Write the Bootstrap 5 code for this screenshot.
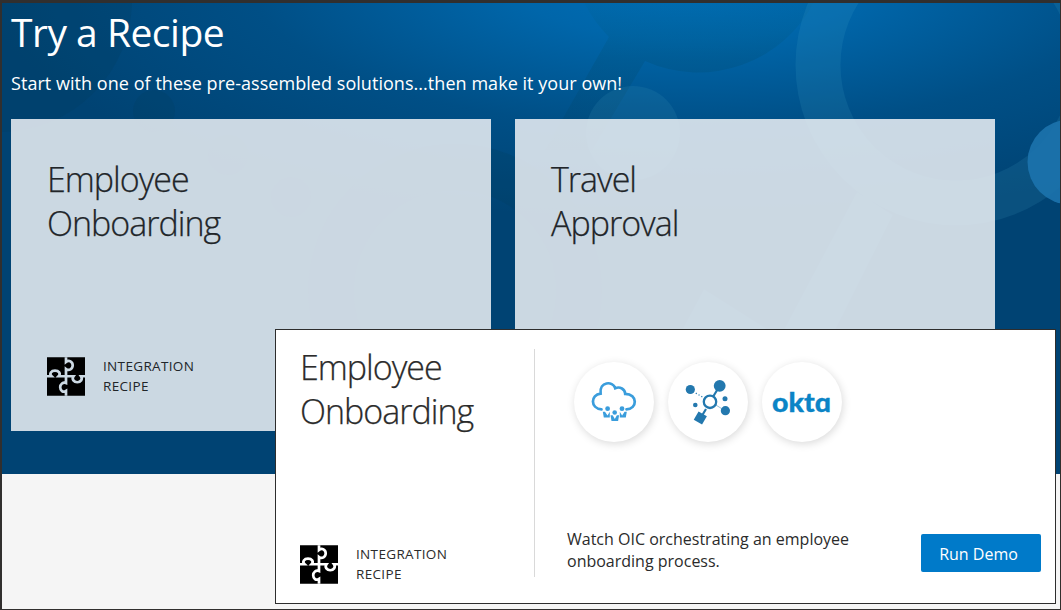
<!DOCTYPE html>
<html lang="en">
<head>
<meta charset="utf-8">
<title>Try a Recipe</title>
<meta name="viewport" content="width=device-width, initial-scale=1">
<link href="https://cdn.jsdelivr.net/npm/bootstrap@5.3.0/dist/css/bootstrap.min.css" rel="stylesheet">
<style>
body{font-family:"Open Sans","Noto Sans",sans-serif;color:#2b2b2b;background:#f5f5f5;overflow:hidden}
.frame{height:610px;border:solid #312f2e;border-width:3px 1px 1px 2px;background:#f5f5f5}
.hero{height:471px;background:#004373;padding:6px 9px;overflow:hidden}
.backdrop{left:-2px;top:-3px;z-index:0}
.hero-title{font-size:39px;line-height:46px;letter-spacing:-.5px;margin:0}
.hero-sub{font-size:18px;line-height:26px;letter-spacing:.045px;margin:15px 0 23px}
.tile{width:480px;height:312px;background:rgba(234,239,243,.865);padding:38px 36px 35px}
.tiles{gap:24px}
.tile-title{font-size:34px;line-height:44px;font-weight:300;letter-spacing:-1px;margin:0;-webkit-text-stroke:.25px currentColor}
.kind{font-size:13.5px;line-height:20px;letter-spacing:.34px;gap:18px}
.kind svg{--gap:#ccd9e3}
.detail{left:273px;top:326px;width:781px;height:275px;border:1px solid #2d2d2d;background:#fff;padding:15px 14px 20px 24px;z-index:2}
.detail .kind svg{--gap:#fff}
.detail-left{width:235px;border-right:1px solid #d9d9d9;height:228px;margin-top:4px}
.detail-left .tile-title{margin-top:-4px}
.detail-left .kind{margin-bottom:-7px}
.detail-right{padding:17px 0 0 39px}
.discs{gap:14px}
.disc{width:80px;height:80px;box-shadow:1px 2px 8px rgba(0,0,0,.15);background:#fff}
.desc{font-size:16px;line-height:22px;letter-spacing:0;margin:0 0 11px -7px}
.btn-demo{--bs-btn-color:#fff;--bs-btn-bg:#007ac9;--bs-btn-hover-bg:#006bb2;--bs-btn-hover-color:#fff;--bs-btn-border-radius:2px;--bs-btn-font-size:16px;width:120px;height:38px;padding:1px 5px 0 0;margin-bottom:11px}
</style>
</head>
<body>
<svg width="0" height="0" class="position-absolute" aria-hidden="true">
<symbol id="puzzle" viewBox="0 0 38 38.5">
<rect width="38" height="38.5" fill="#000"/>
<g fill="none" stroke="var(--gap)" stroke-width="2.7">
<path d="M19 0V4.600C22 2.200 25.700 4.600 25.700 8.100S22 14 19 11.700V25.700C16 24.500 13.200 27 13.200 30.100S16 35.700 19 33.700V38.500"/>
<path d="M0 19H4.600C1.800 16.300 4.300 13.300 8 13.300S14.200 16.300 11.600 19H26.500C24.400 22 27 25 30.300 25S36 22 34 19H38"/>
</g>
</symbol>
</svg>
<main class="frame position-relative">
<section class="hero position-relative text-white">
<svg class="backdrop position-absolute" width="1061" height="474" viewBox="0 0 1061 474" aria-hidden="true">
<defs><radialGradient id="glow" gradientUnits="userSpaceOnUse" cx="0" cy="0" r="1" gradientTransform="translate(690 -20) scale(710 240)">
<stop offset="0" stop-color="#006fb8"/><stop offset=".25" stop-color="#0066aa"/><stop offset=".62" stop-color="#004f86"/><stop offset="1" stop-color="#004373"/></radialGradient>
<linearGradient id="shade" gradientUnits="userSpaceOnUse" x1="0" y1="0" x2="0" y2="150"><stop offset="0" stop-color="#00565c" stop-opacity=".04"/><stop offset=".4" stop-color="#00445c" stop-opacity=".18"/><stop offset="1" stop-color="#003c5c" stop-opacity=".17"/></linearGradient></defs>
<rect width="1061" height="474" fill="url(#glow)"/>
<g fill="#003c5c" fill-opacity=".2">
<circle cx="0" cy="0" r="132"/><circle cx="154" cy="111" r="21"/><circle cx="228" cy="155" r="20"/><circle cx="291" cy="197" r="20"/>
</g>
<path fill="url(#shade)" d="M583 0A130 130 0 0 0 609 37L558 127L545 150H592L645 61A130 130 0 0 0 815 0Z"/>
<circle cx="455" cy="291" r="124" fill="none" stroke="#003c5c" stroke-opacity=".2" stroke-width="46"/>
<circle cx="633" cy="133" r="47" fill="#3995b8" fill-opacity=".17"/>
<circle cx="956" cy="65" r="138" fill="none" stroke="#4bb0d0" stroke-opacity=".13" stroke-width="45"/>
<path d="M857 192L780 337L704 289L674 345V440H780L893 215Z" fill="#4bb0d0" fill-opacity=".13"/>
<circle cx="1070" cy="162" r="42.500" fill="#1d74ae" fill-opacity=".88"/>
</svg>
<div class="position-relative">
<h1 class="hero-title fw-normal">Try a Recipe</h1>
<p class="hero-sub">Start with one of these pre-assembled solutions...then make it your own!</p>
<div class="tiles d-flex text-dark">
<article class="tile d-flex flex-column justify-content-between">
<h2 class="tile-title">Employee<br>Onboarding</h2>
<div class="kind d-flex align-items-center"><svg width="38" height="39"><use href="#puzzle"/></svg><span>INTEGRATION<br>RECIPE</span></div>
</article>
<article class="tile"><h2 class="tile-title">Travel<br>Approval</h2></article>
</div>
</div>
</section>
<section class="detail position-absolute d-flex">
<div class="detail-left d-flex flex-column justify-content-between flex-shrink-0">
<h2 class="tile-title">Employee<br>Onboarding</h2>
<div class="kind d-flex align-items-center"><svg width="38" height="39"><use href="#puzzle"/></svg><span>INTEGRATION<br>RECIPE</span></div>
</div>
<div class="detail-right d-flex flex-column justify-content-between flex-grow-1">
<div class="discs d-flex">
<div class="disc rounded-circle"><svg width="80" height="80" viewBox="0 0 80 80" fill="none" stroke="#3a9ddc" stroke-width="2.700">
<path stroke-linecap="round" d="M27.500 47.300C16 46.500 16.500 32.500 26.600 31.600C25 19.500 39 18.500 41.200 26.200C46 24.200 51 27 51.200 31.800C64 32 63.500 47.300 52.500 47.300"/>
<g fill="#3a9ddc" stroke="none"><circle cx="33.600" cy="46.700" r="2.400"/><circle cx="40.700" cy="50.500" r="2.300"/><circle cx="48" cy="46.700" r="2.400"/>
<path d="M28.800 49.800h2.200l2.500 3.700 2.300-3.700v5.800h-6zM52.800 49.800h-2.200l-2.500 3.700-2.300-3.700v5.800h6zM36.500 53.300h2.200l2.100 3.700 2.100-3.700h2.200l-1 5.600h-6.600z"/></g>
</svg></div>
<div class="disc rounded-circle"><svg width="80" height="80" viewBox="0 0 80 80" fill="#2378ae">
<path d="M38 47L32 57M45.500 34L51 25" stroke="#2378ae" stroke-width="2.200"/><path d="M25 29.500L37 36.500" stroke="#2378ae" stroke-width="1.200" stroke-dasharray="1.200 2"/><path d="M47 42.500L56 48" stroke="#2378ae" stroke-width=".8" opacity=".6"/>
<circle cx="42" cy="39.800" r="6.200" fill="#fff" stroke="#2378ae" stroke-width="2.300"/>
<circle cx="22.300" cy="27.500" r="4.600"/><circle cx="27.300" cy="43" r="2.300"/><circle cx="51.700" cy="23.800" r="5.900"/><circle cx="57" cy="36.700" r="2.500"/><circle cx="57.400" cy="48.700" r="4.600"/>
<rect x="27.500" y="51.200" width="9.600" height="9.600" transform="rotate(30 32.300 56)"/>
</svg></div>
<div class="disc rounded-circle"><svg width="80" height="80" viewBox="0 0 80 80"><text x="10" y="49.500" textLength="59" lengthAdjust="spacingAndGlyphs" font-family="Lato,sans-serif" font-weight="900" font-size="26" fill="#0b84c6" stroke="#0b84c6" stroke-width=".3">oktɑ</text></svg></div>
</div>
<div class="d-flex align-items-end justify-content-between">
<div class="desc">Watch OIC orchestrating an employee<br>onboarding process.</div>
<button class="btn btn-demo border-0" type="button">Run Demo</button>
</div>
</div>
</section>
</main>
<script src="https://cdn.jsdelivr.net/npm/bootstrap@5.3.0/dist/js/bootstrap.bundle.min.js"></script>
</body>
</html>
